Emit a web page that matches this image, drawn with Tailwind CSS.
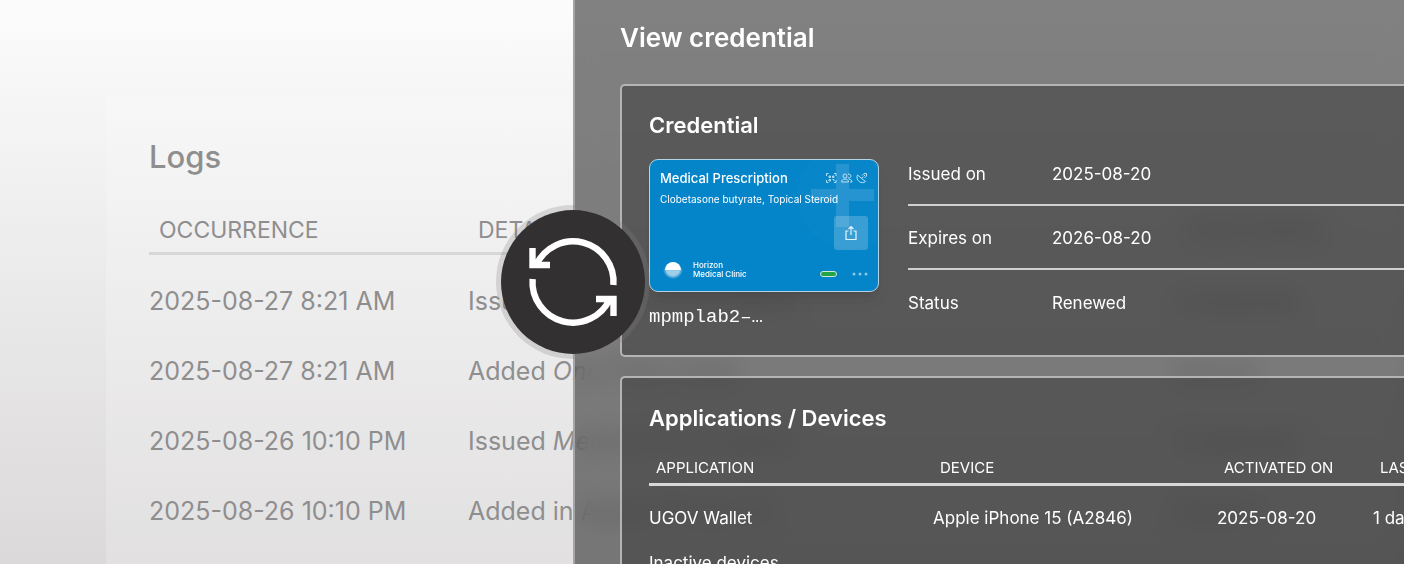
<!DOCTYPE html>
<html lang="en">

<head>
    <title>View credential</title>
    <meta charset="UTF-8">
    <meta name="viewport" content="width=device-width, initial-scale=1.0">
    <script src="https://cdn.jsdelivr.net/npm/@tailwindcss/browser@4"></script>
</head>

<body class="font-['Inter','Liberation_Sans',sans-serif]">

<div class="relative h-screen overflow-hidden bg-linear-to-b from-[#fcfcfc] to-[#dbd9da]">

    <!-- logs -->
    <section class="mt-[95px] mr-2 ml-[106px] h-full overflow-hidden bg-white/20 pt-10 pl-[43px] text-[#8f8e8f]">
        <h2 class="text-[31px] leading-11 font-medium">Logs</h2>
        <table class="mt-7 w-full table-fixed text-left text-[25px] leading-7">
            <thead>
            <tr class="border-b-3 border-[#d8d7d8] text-[23px]">
                <th class="w-[319px] px-[10px] pt-[9px] pb-2 font-normal">OCCURRENCE</th>
                <th class="w-[708px] px-[10px] pt-[9px] pb-2 font-normal">DETAILS</th>
                <th class="px-[10px] pt-[9px] pb-2 font-normal">PERFORMER</th>
            </tr>
            </thead>
            <tbody>
            <tr>
                <td class="pt-8 pb-[10px]">2025-08-27 8:21 AM</td>
                <td class="pt-8 pb-[10px]">Issued <i>Medical Prescription</i></td>
                <td class="pt-8 pb-[10px]">Credential</td>
            </tr>
            <tr>
                <td class="pt-8 pb-[10px]">2025-08-27 8:21 AM</td>
                <td class="pt-8 pb-[10px]">Added <i>One Time Code</i></td>
                <td class="pt-8 pb-[10px]">Device</td>
            </tr>
            <tr>
                <td class="pt-8 pb-[10px]">2025-08-26 10:10 PM</td>
                <td class="pt-8 pb-[10px]">Issued <i>Medical Prescription</i></td>
                <td class="pt-8 pb-[10px]">Credential</td>
            </tr>
            <tr>
                <td class="pt-8 pb-[10px]">2025-08-26 10:10 PM</td>
                <td class="pt-8 pb-[10px]">Added in Apple iPhone 15</td>
                <td class="pt-8 pb-[10px]">Device</td>
            </tr>
            </tbody>
        </table>
    </section>

    <!-- credential panel -->
    <main class="absolute inset-y-0 right-0 left-[573px] border-l-2 border-[#a5a5a5] bg-[#333333]/61 pt-[22px] pl-[45px] text-[17px] text-white backdrop-blur-md">
        <h1 class="text-[26px] leading-8 font-semibold">View credential</h1>

        <section class="mt-[30px] flex rounded-l-[5px] border-2 border-r-0 border-[#b4b4b4] bg-[#363535]/50 pt-[25px] pb-[21px] pl-[27px]">
            <div class="w-[230px] shrink-0">
                <h2 class="text-[22px] leading-7 font-semibold">Credential</h2>

                <article class="relative mt-5 flex h-[133px] flex-col overflow-hidden rounded-[9px] border border-[#b5d3e4] bg-[#0484c9] px-[10px] pt-[9px] pb-2 shadow-lg">
                    <svg class="absolute top-0 right-0 h-[131px] w-[100px]" viewBox="0 0 100 131" fill="#fff">
                        <circle cx="72" cy="36" r="53" opacity=".02"/>
                        <path d="M58 4h13v25h25v12H71v26H58V41H33V29h25z" opacity=".12"/>
                    </svg>

                    <div class="relative flex items-center justify-between">
                        <h3 class="text-[13px] leading-[18px] font-medium">Medical Prescription</h3>
                        <svg class="h-3 w-[43px]" viewBox="0 0 43 12" fill="none" stroke="#b8dff4">
                            <path d="M1.500 4V1.500h2M9 1.500h2V4M11 8v2.500H9M3.500 10.500h-2V8M4 4h1.500v1.500H4zM7.500 4H9v1.500H7.500zM4 7.500h1.500V9H4zM7.500 7.500H9V9"/>
                            <circle cx="20" cy="4" r="2"/>
                            <path d="M16.500 10c0-4 7-4 7 0zM23 2.300a2 2 0 1 1 0 3.500M24 7.300c2 0 3 1 3 2.700h-2"/>
                            <path d="M32.500 3c-2.500 5 4 10 8 6.500zM36.500 6.500l2-2M37 3.500l2-2h2.500v2.500l-2 2M39 4l1-1"/>
                        </svg>
                    </div>
                    <p class="relative mt-[6px] text-[10px] leading-3">Clobetasone butyrate, Topical Steroid</p>

                    <button type="button" aria-label="Share"
                            class="relative mt-[11px] flex size-[34px] items-center justify-center self-end rounded-[3px] bg-white/20">
                        <svg class="h-4 w-3" viewBox="0 0 12 16" fill="none" stroke="#e6f3fb" stroke-width="1.200">
                            <path d="M3.500 6H1v8.500h10V6H8.500M6 10V1.500M3.500 4L6 1.500 8.500 4"/>
                        </svg>
                    </button>

                    <div class="relative mt-auto flex items-center">
                        <svg class="size-[26px]" viewBox="0 0 26 26">
                            <defs>
                                <filter id="soft" x="-30%" y="-30%" width="160%" height="160%">
                                    <feGaussianBlur stdDeviation=".9"/>
                                </filter>
                            </defs>
                            <path d="M4.500 12a8.500 8.500 0 0 0 17 0z" fill="#9fd0ea" filter="url(#soft)"/>
                            <path d="M5 13a8 8 0 0 1 16 0z" fill="#fff"/>
                        </svg>
                        <p class="ml-[7px] text-[8px] leading-[9px] font-medium">Horizon<br>Medical Clinic</p>
                        <span class="mt-2 ml-auto h-[6px] w-[17px] rounded-full border border-[#cfe9d5] bg-[#22a447]"></span>
                        <svg class="mt-2 ml-[15px] h-1 w-4" viewBox="0 0 16 4" fill="#8cc8e8">
                            <circle cx="2" cy="2" r="1.500"/>
                            <circle cx="8" cy="2" r="1.500"/>
                            <circle cx="14" cy="2" r="1.500"/>
                        </svg>
                    </div>
                </article>

                <p class="mt-[11px] font-['Liberation_Mono',monospace] text-[19px] leading-7">mpmplab2–…</p>
            </div>

            <dl class="mt-[31px] ml-[29px] grow">
                <div class="flex h-16 items-center border-b-2 border-[#d0d0d0] pt-1">
                    <dt class="w-36">Issued on</dt>
                    <dd>2025-08-20</dd>
                </div>
                <div class="flex h-16 items-center border-b-2 border-[#d0d0d0] pt-1">
                    <dt class="w-36">Expires on</dt>
                    <dd>2026-08-20</dd>
                </div>
                <div class="flex h-16 items-center pt-1">
                    <dt class="w-36">Status</dt>
                    <dd>Renewed</dd>
                </div>
            </dl>
        </section>

        <section class="mt-[19px] h-80 overflow-hidden rounded-l-[5px] border-2 border-r-0 border-[#b4b4b4] bg-[#363535]/50 pt-[26px] pl-[27px]">
            <h2 class="text-[22px] leading-7 font-semibold">Applications / Devices</h2>
            <table class="mt-5 w-[1000px] table-fixed text-left leading-7">
                <thead>
                <tr class="border-b-3 border-[#d8d8d8] text-[15px]">
                    <th class="w-[284px] px-[7px] pt-[2px] pb-px font-normal">APPLICATION</th>
                    <th class="w-[284px] px-[7px] pt-[2px] pb-px font-normal">DEVICE</th>
                    <th class="w-[156px] px-[7px] pt-[2px] pb-px font-normal">ACTIVATED ON</th>
                    <th class="px-[7px] pt-[2px] pb-px font-normal">LAST USED</th>
                </tr>
                </thead>
                <tbody>
                <tr>
                    <td class="pt-[18px] pb-[19px]">UGOV Wallet</td>
                    <td class="pt-[18px] pb-[19px]">Apple iPhone 15 (A2846)</td>
                    <td class="pt-[18px] pb-[19px]">2025-08-20</td>
                    <td class="pt-[18px] pb-[19px]">1 day ago</td>
                </tr>
                </tbody>
            </table>
            <h3>Inactive devices</h3>
        </section>

        <div class="absolute top-1/2 -left-[2px] flex size-36 -translate-1/2 items-center justify-center rounded-full bg-[#333031] ring-[5px] ring-[#808080]/25">
            <svg class="size-[88px] overflow-visible" viewBox="0 0 88 88" fill="none" stroke="#fff" stroke-width="6.400">
                <path d="M84.400 47A40.500 40.500 0 0 0 7.200 27M3.500 10v17H21"/>
                <path d="M3.600 41A40.500 40.500 0 0 0 80.800 61M67 61h17.500v17"/>
            </svg>
        </div>
    </main>
</div>

</body>
</html>
